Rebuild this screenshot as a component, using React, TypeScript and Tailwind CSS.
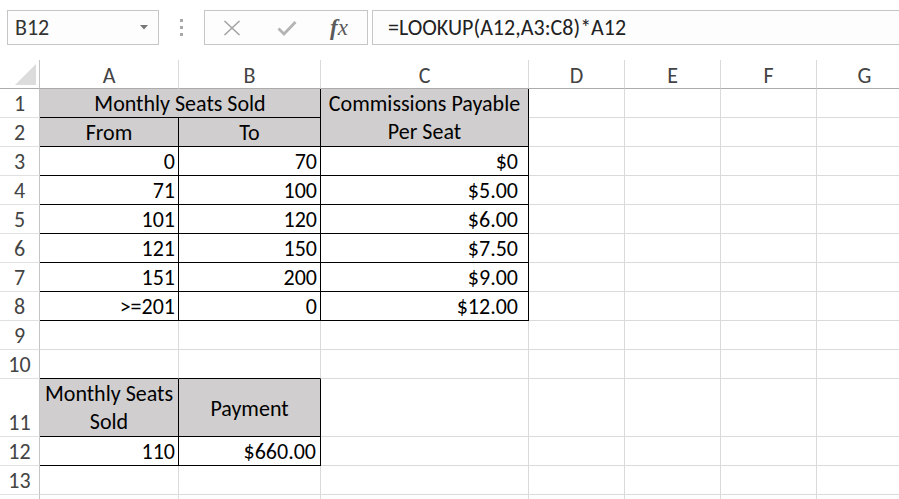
import React from "react";

const F = { fontFamily: "Carlito, Calibri, Lato, 'Liberation Sans', sans-serif" };

function C({ cls, children }: { cls: string; children?: React.ReactNode }) {
  return <div className={cls}>{children}</div>;
}

const n = "border-r border-b border-[#dadada]";
const rh = "border-r border-[#c4c4c4] border-b border-b-[#e0e0e0] flex items-end justify-center text-[#444] leading-[26px]";
const val = "border-r border-b border-black flex items-end justify-end pr-[3px] leading-[26px]";
const valC = "border-r border-b border-black flex items-end justify-end pr-[10px] leading-[26px]";
const ch = "border-r border-[#dadada] border-b border-b-[#ababab] flex items-center justify-center text-[#444] pt-[2px]";

export default function App() {
  return (
    <div className="w-[899px] h-[499px] overflow-hidden bg-white text-[22px] text-black" style={F}>
      {/* toolbar */}
      <div className="h-[60px] flex items-start pt-[10px]">
        <div className="ml-[7px] w-[152px] h-[35px] border border-[#c6c6c6] bg-[#fdfdfd] flex items-center pl-[7px] pr-[10px] text-[#333]">
          <span className="flex-1 leading-none">B12</span>
          <svg width="8" height="5" viewBox="0 0 8 5"><path d="M0 0 L8 0 L4 4.5 Z" fill="#777" /></svg>
        </div>
        <div className="w-[45px] h-[35px] flex flex-col items-center justify-center gap-[4px]">
          <span className="w-[3px] h-[3px] bg-[#a8a8a8]" />
          <span className="w-[3px] h-[3px] bg-[#a8a8a8]" />
          <span className="w-[3px] h-[3px] bg-[#a8a8a8]" />
        </div>
        <div className="w-[164px] h-[35px] border border-[#c6c6c6] bg-[#fdfdfd] flex items-center">
          <svg className="ml-[18px]" width="18" height="16" viewBox="0 0 18 16">
            <path d="M1.5 1 L16.5 15 M16.5 1 L1.5 15" stroke="#a3a3a3" strokeWidth="1.6" fill="none" />
          </svg>
          <svg className="ml-[36px]" width="20" height="16" viewBox="0 0 20 16">
            <path d="M1.5 8.5 L7 14 L18.5 2" stroke="#b4b4b4" strokeWidth="2.8" fill="none" />
          </svg>
          <span className="ml-[33px] italic text-[#5a5a5a] text-[23px] leading-none" style={{ fontFamily: "'Liberation Serif', 'DejaVu Serif', serif" }}>
            <span className="font-bold">f</span>x
          </span>
        </div>
        <div className="ml-[4px] flex-1 h-[35px] border-t border-b border-l border-[#c6c6c6] bg-[#fdfdfd] flex items-center pl-[15px] text-[#222]">
          <span className="leading-none">=LOOKUP(A12,A3:C8)*A12</span>
        </div>
      </div>

      {/* grid */}
      <div className="grid grid-cols-[40px_139px_142px_208px_96px_96px_96px_96px] grid-rows-[29px_repeat(10,29px)_58px_29px_29px_29px] w-[913px]">
        {/* header row */}
        <div className="border-r border-[#c4c4c4] border-b border-b-[#ababab] flex items-end justify-end pr-[3px] pb-[3px]">
          <svg width="21" height="21" viewBox="0 0 21 21"><path d="M21 0 L21 21 L0 21 Z" fill="#dcdcdc" /></svg>
        </div>
        <C cls={ch}>A</C>
        <C cls={ch}>B</C>
        <C cls={ch}>C</C>
        <C cls={ch}>D</C>
        <C cls={ch}>E</C>
        <C cls={ch}>F</C>
        <C cls={ch}>G</C>

        {/* row 1 */}
        <C cls={rh}>1</C>
        <C cls="col-span-2 bg-[#d0cece] border-r border-b border-black flex items-end justify-center leading-[26px]">Monthly Seats Sold</C>
        <C cls="row-span-2 bg-[#d0cece] border-r border-b border-black flex flex-col items-center justify-end leading-[28px]">
          <span>Commissions Payable</span>
          <span>Per Seat</span>
        </C>
        <C cls={n} />
        <C cls={n} />
        <C cls={n} />
        <C cls={n} />

        {/* row 2 */}
        <C cls={rh}>2</C>
        <C cls="bg-[#d0cece] border-r border-b border-black flex items-end justify-center leading-[26px]">From</C>
        <C cls="bg-[#d0cece] border-r border-b border-black flex items-end justify-center leading-[26px]">To</C>
        <C cls={n} />
        <C cls={n} />
        <C cls={n} />
        <C cls={n} />

        {/* rows 3-8 */}
        {[
          ["3", "0", "70", "$0"],
          ["4", "71", "100", "$5.00"],
          ["5", "101", "120", "$6.00"],
          ["6", "121", "150", "$7.50"],
          ["7", "151", "200", "$9.00"],
          ["8", ">=201", "0", "$12.00"],
        ].map((r) => (
          <React.Fragment key={r[0]}>
            <C cls={rh}>{r[0]}</C>
            <C cls={val}>{r[1]}</C>
            <C cls={val}>{r[2]}</C>
            <C cls={valC}>{r[3]}</C>
            <C cls={n} />
            <C cls={n} />
            <C cls={n} />
            <C cls={n} />
          </React.Fragment>
        ))}

        {/* row 9 */}
        <C cls={rh}>9</C>
        <C cls={n} />
        <C cls={n} />
        <C cls={n} />
        <C cls={n} />
        <C cls={n} />
        <C cls={n} />
        <C cls={n} />

        {/* row 10 */}
        <C cls={rh}>10</C>
        <C cls="border-r border-[#dadada] border-b border-b-black" />
        <C cls="border-r border-[#dadada] border-b border-b-black" />
        <C cls={n} />
        <C cls={n} />
        <C cls={n} />
        <C cls={n} />
        <C cls={n} />

        {/* row 11 */}
        <C cls={rh}>11</C>
        <C cls="bg-[#d0cece] border-r border-b border-black flex flex-col items-center justify-end leading-[28px]">
          <span>Monthly Seats</span>
          <span>Sold</span>
        </C>
        <C cls="bg-[#d0cece] border-r border-b border-black flex items-center justify-center leading-[29px] pt-[2px]">Payment</C>
        <C cls={n} />
        <C cls={n} />
        <C cls={n} />
        <C cls={n} />
        <C cls={n} />

        {/* row 12 */}
        <C cls={rh}>12</C>
        <C cls={val}>110</C>
        <C cls="border-r border-b border-black flex items-end justify-end pr-[4px] leading-[26px]">$660.00</C>
        <C cls={n} />
        <C cls={n} />
        <C cls={n} />
        <C cls={n} />
        <C cls={n} />

        {/* row 13 */}
        <C cls={rh}>13</C>
        <C cls={n} />
        <C cls={n} />
        <C cls={n} />
        <C cls={n} />
        <C cls={n} />
        <C cls={n} />
        <C cls={n} />

        {/* row 14 */}
        <C cls="border-r border-[#c4c4c4] border-b border-b-[#e0e0e0]" />
        <C cls={n} />
        <C cls={n} />
        <C cls={n} />
        <C cls={n} />
        <C cls={n} />
        <C cls={n} />
        <C cls={n} />
      </div>
    </div>
  );
}
